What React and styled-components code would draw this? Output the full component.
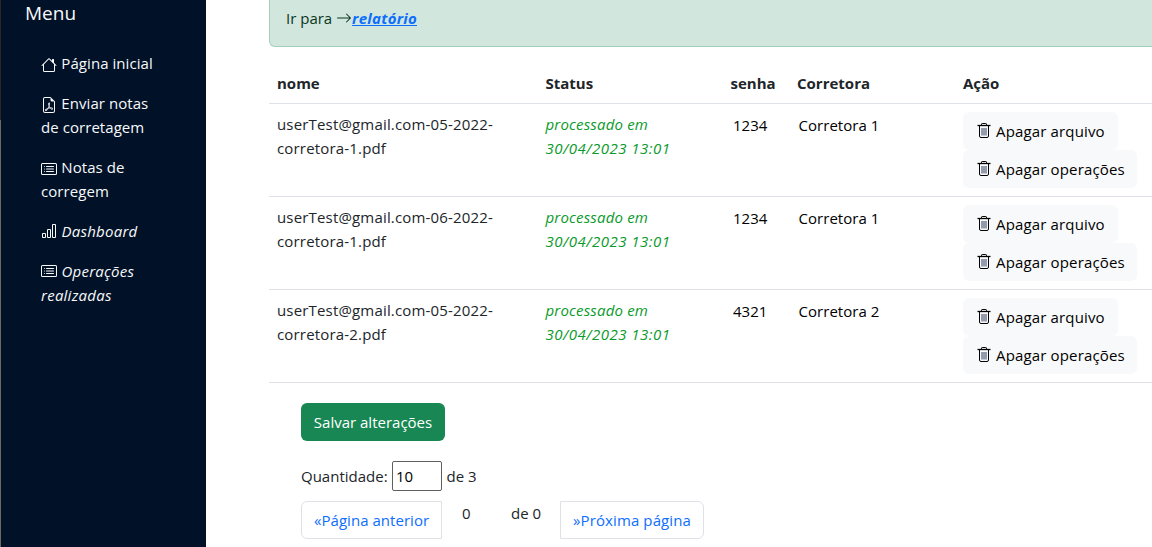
import React from "react";
import styled, { createGlobalStyle } from "styled-components";
import {
  BsHouse,
  BsFileEarmarkPdf,
  BsCardList,
  BsBarChart,
  BsArrowRight,
} from "react-icons/bs";

const GlobalStyle = createGlobalStyle`
  *, *::before, *::after { box-sizing: border-box; }
  body {
    margin: 0;
    overflow: hidden;
    background: #fff;
    color: #212529;
    font: 400 15px/24px "Open Sans", "Noto Sans", sans-serif;
  }
`;

const Page = styled.div`
  display: flex;
  height: 547px;
  overflow: hidden;
`;

const Edge = styled.div`
  flex: 0 0 1px;
  background: linear-gradient(#2a2725 120px, #6c6a58 120px);
`;

const Sidebar = styled.nav`
  flex: 0 0 205px;
  padding: 0 24px;
  background: #001128;
  color: #f8f9fa;
`;

const SidebarTitle = styled.h5`
  margin: 0 0 17px;
  font-size: 19px;
  font-weight: 400;
  line-height: 26px;
`;

const NavItem = styled.a`
  display: block;
  width: 150px;
  padding: 8px 16px;
  font-style: ${(p) => (p.$italic ? "italic" : "normal")};
  letter-spacing: ${(p) => (p.$italic ? "0.24px" : "0.06px")};

  svg {
    margin-right: 0.4px;
    vertical-align: ${(p) => (p.$italic ? "-2px" : "-4px")};
  }
`;

const Main = styled.main`
  flex: 0 0 auto;
  width: 1000px;
  padding-left: 63px;
`;

const Alert = styled.div`
  display: flex;
  align-items: center;
  height: 47px;
  padding: 6px 16px 16px;
  border: solid #a3cfbb;
  border-width: 0 1px 1px;
  border-radius: 0 0 6px 6px;
  background: #d1e7dd;
  color: #0a3622;
  white-space: pre;
  margin-bottom: 16px;
`;

const ReportLink = styled.a`
  color: #0d6efd;
  font-weight: 700;
  font-style: italic;
  letter-spacing: 0.27px;
  text-decoration: underline;
`;

const Table = styled.table`
  width: 937px;
  border-collapse: separate;
  border-spacing: 0;
  table-layout: fixed;
`;

const HeadCell = styled.th`
  width: ${(p) => p.$width}px;
  padding: 8px 8px 8px;
  border-bottom: 1px solid #dee2e6;
  font-weight: 700;
  text-align: left;
`;

const Cell = styled.td`
  height: 93px;
  padding: 8px;
  border-bottom: 1px solid #dee2e6;
  vertical-align: top;
  letter-spacing: 0.17px;
`;

const StatusText = styled.em`
  display: block;
  color: #0a9a2c;
  letter-spacing: ${(p) => (p.$date ? "0.48px" : "0.18px")};
`;

const Field = styled.span`
  display: block;
  padding: 1px 2px 0 ${(p) => p.$indent}px;
  color: #000;
  letter-spacing: 0.04px;
`;

const Actions = styled.div`
  display: flex;
  flex-direction: column;
  align-items: flex-start;
`;

const LightButton = styled.button`
  display: flex;
  align-items: center;
  gap: 4px;
  width: ${(p) => p.$width}px;
  height: 38px;
  padding: 0 0 0 13px;
  border: 0;
  border-radius: 6px;
  background: #f8f9fa;
  color: #000;
  font: inherit;
  letter-spacing: 0.15px;
  white-space: nowrap;
`;

const TrashSvg = styled.svg`
  flex: none;
  width: 16px;
  height: 16px;
  fill: none;
  stroke: #000;
`;

const Footer = styled.section`
  display: flex;
  flex-direction: column;
  align-items: flex-start;
  padding: 20px 0 0 32px;
`;

const SaveButton = styled.button`
  width: 144px;
  height: 38px;
  padding: 0;
  border: 0;
  border-radius: 6px;
  background: #198754;
  color: #fff;
  font: inherit;
`;

const Quantity = styled.label`
  display: flex;
  align-items: center;
  gap: 4px;
  height: 30px;
  margin: 20px 0 10px;
`;

const QuantityLabel = styled.span`
  width: 87px;
`;

const QuantityInput = styled.input`
  width: 50px;
  height: 30px;
  padding: 0 3px;
  border: 1px solid #5f5f5f;
  border-radius: 2px;
  background: #fff;
  color: #000;
  font: inherit;
`;

const QuantityTotal = styled.span`
  padding-left: 0.5px;
`;

const Pagination = styled.div`
  display: flex;
  height: 38px;
`;

const PageButton = styled.button`
  width: ${(p) => p.$width}px;
  height: 38px;
  padding: 0 0 0 12px;
  border: 1px solid #dee2e6;
  border-radius: ${(p) => (p.$next ? "0 6px 6px 0" : "6px 0 0 6px")};
  background: #fff;
  color: #0d6efd;
  font: inherit;
  letter-spacing: ${(p) => (p.$next ? "0.11px" : "0.04px")};
  text-align: left;
  white-space: nowrap;
`;

const PageNumber = styled.span`
  width: 49px;
  padding-left: 20px;
`;

const PageTotal = styled.span`
  width: 69px;
  padding-left: 20px;
`;

const TrashIcon = () => (
  <TrashSvg viewBox="0 0 16 16" aria-hidden="true">
    <path d="M5.5 2V1.2a.7.7 0 0 1 .7-.7h3.6a.7.7 0 0 1 .7.7V2" />
    <path d="M1.5 2.5h13" strokeWidth="1.3" />
    <path d="M3.5 3v10a1.5 1.5 0 0 0 1.5 1.5h6a1.5 1.5 0 0 0 1.5-1.5V3" />
    <path d="M6 5v7.5M8 5v7.5M10 5v7.5" strokeWidth="0.9" stroke="#16264c" />
  </TrashSvg>
);

const links = [
  { icon: BsHouse, label: "Página inicial" },
  { icon: BsFileEarmarkPdf, label: "Enviar notas de corretagem" },
  { icon: BsCardList, label: "Notas de corregem" },
  { icon: BsBarChart, label: "Dashboard", italic: true },
  { icon: BsCardList, label: "Operações realizadas", italic: true },
];

const columns = [
  ["nome", 268.5],
  ["Status", 185],
  ["senha", 66.5],
  ["Corretora", 166],
  ["Ação", 251],
];

const files = [
  { month: "05", senha: "1234", corretora: "1" },
  { month: "06", senha: "1234", corretora: "1" },
  { month: "05", senha: "4321", corretora: "2" },
];

export default function App() {
  return (
    <Page>
      <GlobalStyle />
      <Edge />
      <Sidebar>
        <SidebarTitle>Menu</SidebarTitle>
        {links.map(({ icon: Icon, label, italic }) => (
          <NavItem key={label} $italic={italic}>
            <Icon size={16} /> {label}
          </NavItem>
        ))}
      </Sidebar>
      <Main>
        <Alert>
          {"Ir para "}
          <BsArrowRight size={16} />
          <ReportLink>relatório</ReportLink>
        </Alert>
        <Table>
          <thead>
            <tr>
              {columns.map(([title, width]) => (
                <HeadCell key={title} $width={width}>
                  {title}
                </HeadCell>
              ))}
            </tr>
          </thead>
          <tbody>
            {files.map(({ month, senha, corretora }) => (
              <tr key={month + corretora}>
                <Cell>
                  userTest@gmail.com-{month}-2022-
                  <br />
                  corretora-{corretora}.pdf
                </Cell>
                <Cell>
                  <StatusText>processado em</StatusText>
                  <StatusText $date>30/04/2023 13:01</StatusText>
                </Cell>
                <Cell>
                  <Field $indent={2.5}>{senha}</Field>
                </Cell>
                <Cell>
                  <Field $indent={1.5}>Corretora {corretora}</Field>
                </Cell>
                <Cell>
                  <Actions>
                    <LightButton $width={155}>
                      <TrashIcon />
                      Apagar arquivo
                    </LightButton>
                    <LightButton $width={174}>
                      <TrashIcon />
                      Apagar operações
                    </LightButton>
                  </Actions>
                </Cell>
              </tr>
            ))}
          </tbody>
        </Table>
        <Footer>
          <SaveButton>Salvar alterações</SaveButton>
          <Quantity>
            <QuantityLabel>Quantidade:</QuantityLabel>
            <QuantityInput defaultValue="10" />
            <QuantityTotal>de 3</QuantityTotal>
          </Quantity>
          <Pagination>
            <PageButton $width={141}>«Página anterior</PageButton>
            <PageNumber>0</PageNumber>
            <PageTotal>de 0</PageTotal>
            <PageButton $width={144} $next>
              »Próxima página
            </PageButton>
          </Pagination>
        </Footer>
      </Main>
    </Page>
  );
}
